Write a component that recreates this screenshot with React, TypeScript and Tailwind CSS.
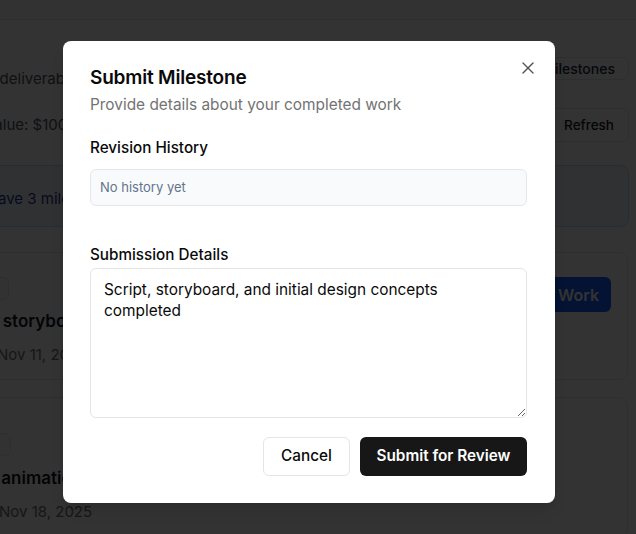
import React from "react";
import { X } from "lucide-react";

export default function App() {
  return (
    <div className="relative w-[636px] h-[534px] overflow-hidden bg-white font-['Inter',sans-serif] text-[#0a0a0a]">
      {/* Background page */}
      <div className="h-[20px] border-b border-gray-200 bg-gray-50" />
      <div className="flex justify-between h-[130px] pr-[7px]">
        <div className="flex flex-col text-[15px] leading-[20px] text-gray-600 whitespace-nowrap">
          <p className="mt-[49px] -ml-[142px]">Track progress and deliverables</p>
          <p className="mt-[26px] -ml-[54px]">Total Value: $1000</p>
        </div>
        <div className="flex flex-col items-end">
          <div className="mt-[37px] h-[23px] flex items-center rounded-md border border-gray-200 px-[13px] text-[14px] font-medium text-gray-800">
            View milestones
          </div>
          <div className="mt-[28px] h-[34px] flex items-center rounded-md border border-gray-200 px-[14px] text-[13.5px] font-medium text-gray-900">
            Refresh
          </div>
        </div>
      </div>
      <div className="mt-[15px] mr-[7px] -ml-[20px] h-[62px] pt-[6px] rounded-lg border border-blue-200 bg-blue-50 flex items-center text-[15px] text-blue-900 whitespace-nowrap">
        <span className="-ml-[23px]">You have 3 milestones remaining</span>
      </div>
      <div className="mt-[25px] mr-[8px] -ml-[80px] h-[128px] rounded-lg border border-gray-200 flex justify-between pr-[16px] pt-[24px]">
        <div className="flex flex-col items-start whitespace-nowrap">
          <div className="h-[23px] w-[88px] rounded-md border border-gray-200 bg-gray-50" />
          <p className="mt-[9px] ml-[13px] text-[17px] leading-[24px] font-semibold text-gray-900">Script &amp; storyboard</p>
          <p className="mt-[12px] ml-[76px] text-[15px] leading-[20px] text-gray-500">Nov 11, 2025</p>
        </div>
        <div className="h-[35px] px-[12px] flex items-center rounded-md bg-blue-600 text-[16px] font-semibold text-white">
          Submit Work
        </div>
      </div>
      <div className="mt-[17px] mr-[8px] -ml-[80px] h-[140px] rounded-lg border border-gray-200 pt-[35px]">
        <div className="flex flex-col items-start whitespace-nowrap">
          <div className="h-[23px] w-[90px] rounded-md border border-gray-200 bg-gray-50" />
          <p className="mt-[10px] ml-[37px] text-[17px] leading-[24px] font-semibold text-gray-900">Final animation</p>
          <p className="mt-[12px] ml-[78px] text-[15px] leading-[20px] text-gray-500">Nov 18, 2025</p>
        </div>
      </div>

      {/* Overlay */}
      <div className="absolute inset-0 bg-black/80" />

      {/* Dialog */}
      <div className="absolute left-[63px] top-[41px] w-[492px] h-[462px] rounded-[8px] bg-white pl-[27px] pr-[28px] pt-[25px] shadow-lg">
        <button className="absolute right-[17px] top-[17px] text-[#0a0a0a] opacity-70">
          <X size={20} strokeWidth={1.6} />
        </button>
        <h2 className="text-[19px] leading-[24px] font-semibold tracking-[-0.01em]">Submit Milestone</h2>
        <p className="mt-[5px] text-[15.4px] leading-[20px] text-[#737373]">Provide details about your completed work</p>

        <p className="mt-[23px] text-[15.25px] leading-[20px] font-medium">Revision History</p>
        <div className="mt-[11px] h-[37px] rounded-md border border-[#e5e7eb] bg-[#f8fafc] px-[9px] flex items-center text-[13px] text-[#64748b]">
          No history yet
        </div>

        <p className="mt-[39px] text-[15.25px] leading-[20px] font-medium">Submission Details</p>
        <textarea
          className="mt-[3px] block w-full h-[150px] rounded-md border border-[#e5e5e5] bg-white px-[13px] pt-[10px] text-[15.4px] leading-[21px] text-[#0a0a0a] outline-none"
          defaultValue="Script, storyboard, and initial design concepts completed"
        />

        <div className="mt-[19px] flex justify-end gap-[10px]">
          <button className="w-[87px] h-[39px] rounded-md border border-[#e5e5e5] bg-white text-[15.3px] font-medium text-[#0a0a0a]">
            Cancel
          </button>
          <button className="w-[167px] h-[39px] rounded-md bg-[#171717] text-[15.3px] font-semibold text-white">
            Submit for Review
          </button>
        </div>
      </div>
    </div>
  );
}
